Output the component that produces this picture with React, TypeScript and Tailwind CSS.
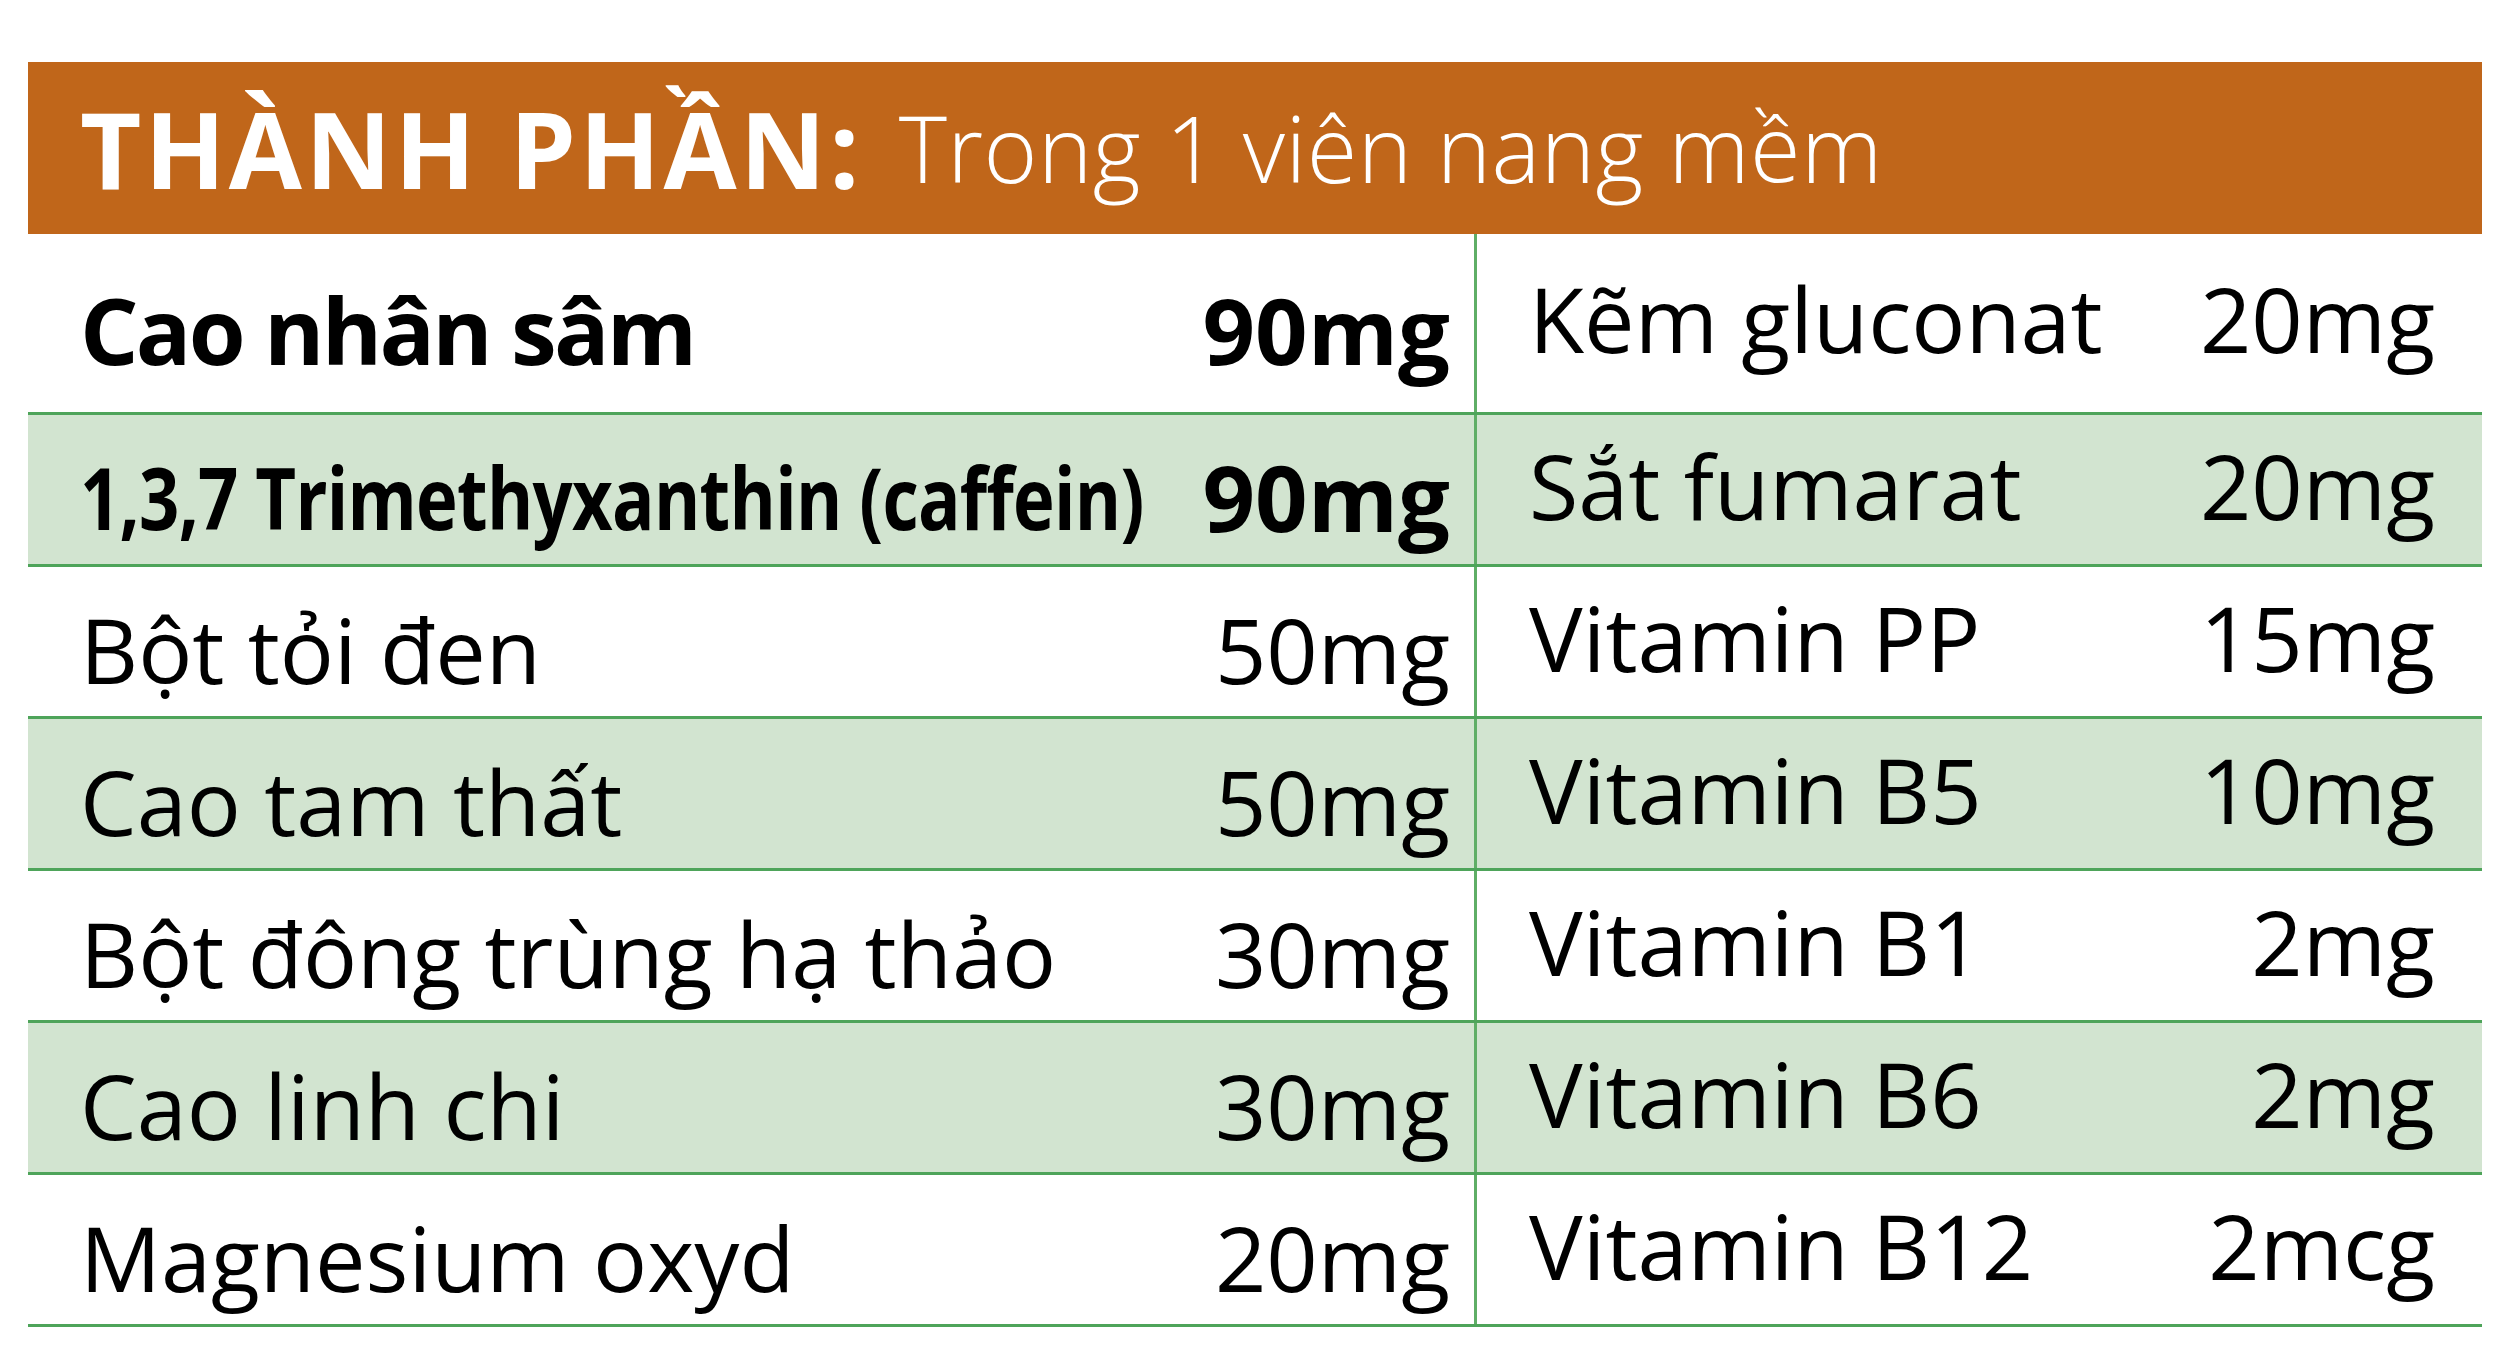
const rows = [
  { name: 'Cao nhân sâm', dose: '90mg', right: 'Kẽm gluconat', rdose: '20mg', kind: 'bold' },
  { name: '1,3,7 Trimethyxanthin (caffein)', dose: '90mg', right: 'Sắt fumarat', rdose: '20mg', kind: 'narrow' },
  { name: 'Bột tỏi đen', dose: '50mg', right: 'Vitamin PP', rdose: '15mg', kind: 'plain' },
  { name: 'Cao tam thất', dose: '50mg', right: 'Vitamin B5', rdose: '10mg', kind: 'plain' },
  { name: 'Bột đông trùng hạ thảo', dose: '30mg', right: 'Vitamin B1', rdose: '2mg', kind: 'plain' },
  { name: 'Cao linh chi', dose: '30mg', right: 'Vitamin B6', rdose: '2mg', kind: 'plain' },
  { name: 'Magnesium oxyd', dose: '20mg', right: 'Vitamin B12', rdose: '2mcg', kind: 'plain' },
]

export default function App() {
  return (
    <div className="min-h-[1372px] w-[2500px] bg-white pl-[28px] pt-[62px] font-['Open_Sans',sans-serif] text-black">
      <div className="w-[2454px]">
        <div className="flex h-[172px] items-center gap-[36px] bg-[#c0661a] pl-[52px] text-white">
          <span className="text-[106px] font-bold leading-none tracking-[0.03em]">THÀNH PHẦN:</span>
          <span className="text-[92px] font-light leading-none tracking-[0.005em]">Trong 1 viên nang mềm</span>
        </div>

        {rows.map((r, i) => (
          <div
            key={r.name}
            className={`grid grid-cols-[1449px_1005px] border-b-[3px] border-[#4ea45a] ${
              i === 0 ? 'h-[181px]' : 'h-[152px]'
            } ${i % 2 === 1 ? 'bg-[#d2e4d0]' : 'bg-white'}`}
          >
            <div className="flex items-center justify-between border-r-[3px] border-[#5fae66] pl-[52px] pr-[24px] pt-[14px]">
              {r.kind === 'bold' && (
                <span className="text-[92px] font-bold leading-none tracking-[-0.03em]">{r.name}</span>
              )}
              {r.kind === 'narrow' && (
                <span className="w-[1071px] whitespace-nowrap">
                  <span className="inline-block origin-left scale-x-[0.82] text-[86px] font-bold leading-none tracking-[-0.01em]">
                    {r.name}
                  </span>
                </span>
              )}
              {r.kind === 'plain' && <span className="text-[90px] leading-none">{r.name}</span>}
              {r.kind === 'plain' ? (
                <span className="text-[90px] leading-none">{r.dose}</span>
              ) : (
                <span className="text-[92px] font-bold leading-none">{r.dose}</span>
              )}
            </div>
            <div className="flex items-center justify-between pb-[10px] pl-[52px] pr-[47px]">
              <span className="text-[90px] leading-none">{r.right}</span>
              <span className="text-[90px] leading-none">{r.rdose}</span>
            </div>
          </div>
        ))}
      </div>
    </div>
  )
}
